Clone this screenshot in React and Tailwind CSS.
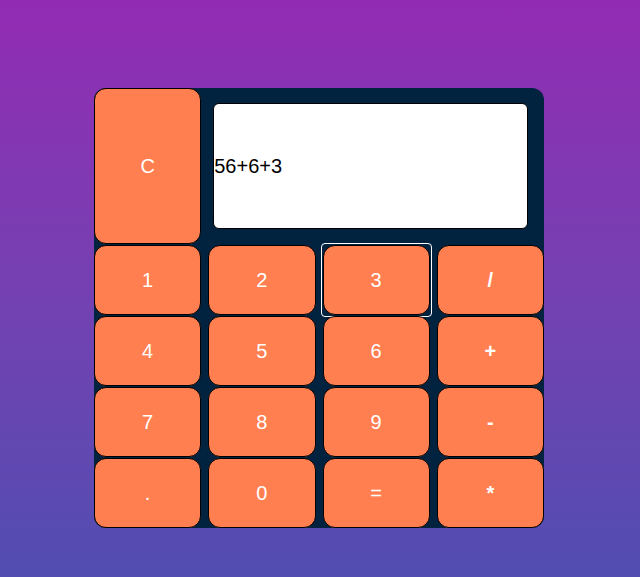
import React, { useState } from "react";

const keys = [
  { label: "1" }, { label: "2" }, { label: "3", focus: true }, { label: "/", op: true },
  { label: "4" }, { label: "5" }, { label: "6" }, { label: "+", op: true },
  { label: "7" }, { label: "8" }, { label: "9" }, { label: "-", op: true },
  { label: "." }, { label: "0" }, { label: "=" }, { label: "*", op: true },
];

export default function App() {
  const [value, setValue] = useState("56+6+3");

  return (
    <div
      className="min-h-[577px] w-full bg-gradient-to-b from-[#922ab3] to-[#514db1] pt-[88px]"
      style={{ fontFamily: '"Liberation Sans", Arial, sans-serif' }}
    >
      <div className="ml-[94px] w-[450px] h-[440px] rounded-[12px] bg-[#022340] grid grid-cols-4 grid-rows-[156px_70px_70px_70px_70px] gap-x-[7px] gap-y-[1px]">
        <button
          onClick={() => setValue("")}
          className="rounded-[12px] border border-black bg-[#ff7f50] text-white text-xl"
        >
          C
        </button>
        <div className="col-span-3 pl-[5px] pr-[16px] py-[15px]">
          <div className="h-full w-full rounded-[6px] border border-black bg-white flex items-center text-xl text-black">
            {value}
          </div>
        </div>
        {keys.map((k) => (
          <div key={k.label} className="relative flex">
            <button
              onClick={() => setValue(value + k.label)}
              className={
                "flex-1 rounded-[12px] border border-black bg-[#ff7f50] text-white text-xl " +
                (k.op ? "font-bold" : "")
              }
            >
              {k.label}
            </button>
            {k.focus && (
              <span className="pointer-events-none absolute -inset-[2px] rounded-[4px] border border-white" />
            )}
          </div>
        ))}
      </div>
    </div>
  );
}
